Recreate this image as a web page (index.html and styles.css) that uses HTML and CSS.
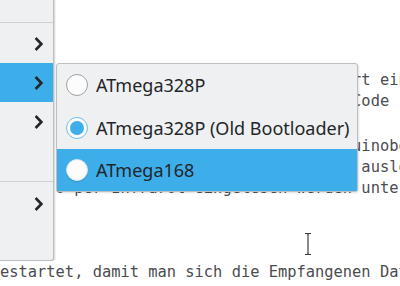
FILE: index.html
```html
<!DOCTYPE html>
<html lang="de">
<head>
    <meta charset="UTF-8">
    <title>Board-Auswahl</title>
    <link rel="stylesheet" href="styles.css">
</head>
<body>
    <!-- Editor im Hintergrund -->
    <div class="editor">
        <div class="line">Nach dem Hochladen des Sketch-Codes wart ein</div>
        <div class="line">auf ein Signal und schickt danach den Code</div>
        <div class="line para">Die Taste am Infrarotempfänger des Arduinoboard</div>
        <div class="line">gedrückt, um den Upload-Vorgang erneut auslösen</div>
        <div class="line">kann so per Infrarot eingelesen werden unter</div>
        <div class="line"> </div>
        <div class="line"> </div>
        <div class="line"> </div>
        <div class="line">estartet, damit man sich die Empfangenen Daten</div>
    </div>

    <!-- Hauptmenü (links) -->
    <div class="menu">
        <div class="menu-item"></div>
        <div class="menu-sep first"></div>
        <div class="menu-item">
            <svg class="chevron" width="11" height="16" viewBox="0 0 11 16"><path d="M2.6 2 L8.4 8 L2.6 14" /></svg>
        </div>
        <div class="menu-item active">
            <svg class="chevron" width="11" height="16" viewBox="0 0 11 16"><path d="M2.6 2 L8.4 8 L2.6 14" /></svg>
        </div>
        <div class="menu-item">
            <svg class="chevron" width="11" height="16" viewBox="0 0 11 16"><path d="M2.6 2 L8.4 8 L2.6 14" /></svg>
        </div>
        <div class="menu-item"></div>
        <div class="menu-sep"></div>
        <div class="menu-item">
            <svg class="chevron" width="11" height="16" viewBox="0 0 11 16"><path d="M2.6 2 L8.4 8 L2.6 14" /></svg>
        </div>
        <div class="menu-item last"></div>
    </div>

    <!-- Untermenü Prozessor -->
    <div class="submenu">
        <div class="sub-item">
            <span class="radio"></span>
            <span class="label">ATmega328P</span>
        </div>
        <div class="sub-item tall">
            <span class="radio checked"></span>
            <span class="label">ATmega328P (Old Bootloader)</span>
        </div>
        <div class="sub-item active">
            <span class="radio"></span>
            <span class="label">ATmega168</span>
        </div>
    </div>

    <!-- Textcursor der Maus -->
    <svg class="ibeam" width="10" height="24" viewBox="0 0 10 24">
        <path d="M2 1.5 H8 M5 1.5 V22.5 M2 22.5 H8" stroke="#fff" stroke-width="3" fill="none" stroke-linecap="round"/>
        <path d="M2 1.5 H8 M5 1.5 V22.5 M2 22.5 H8" stroke="#3b3d40" stroke-width="1.2" fill="none"/>
    </svg>
</body>
</html>
```

FILE: styles.css
```css
:root {
    --breeze-bg: #eff0f1;
    --breeze-text: #232629;
    --breeze-blue: #3daee9;
    --breeze-border: #bcbec0;
}

body {
    margin: 0;
    width: 400px;
    height: 286px;
    overflow: hidden;
    position: relative;
    background: #fff;
}

.editor {
    font-family: "DejaVu Sans Mono", monospace;
    font-size: 15.4px;
    line-height: 21px;
    color: #4a4c4f;
    padding-top: 70px;
}
.line {
    height: 21px;
    white-space: pre;
    overflow: hidden;
}
.para {
    margin-top: 24px;
}

/* Hauptmenü */
.menu {
    position: absolute;
    top: -17px;
    left: -10px;
    width: 63px;
    background: var(--breeze-bg);
    border-right: 1px solid var(--breeze-border);
    border-bottom: 1px solid var(--breeze-border);
    border-bottom-right-radius: 3px;
    box-shadow: 1px 0 0 #dcdde0, 2px 0 0 #f1f2f3;
}
.menu-item {
    height: 39px;
    display: flex;
    align-items: center;
    justify-content: flex-end;
    padding-right: 9px;
}
.menu-item.active {
    background: var(--breeze-blue);
}
.menu-item.last {
    height: 37px;
}
.menu-sep {
    height: 1px;
    background: #cfd1d3;
    margin: 1px 0 2px;
}
.menu-sep.first {
    margin: 0 0 1px;
}
.chevron path {
    fill: none;
    stroke: var(--breeze-text);
    stroke-width: 2.6;
}

/* Untermenü */
.submenu {
    position: absolute;
    top: 63px;
    left: 56px;
    width: 300px;
    background: var(--breeze-bg);
    border: 1px solid var(--breeze-border);
    border-radius: 3px;
    box-shadow: 1px 1px 2px rgba(0,0,0,0.12);
    font-family: "Noto Sans", sans-serif;
    font-size: 18px;
    color: var(--breeze-text);
}
.sub-item {
    height: 42px;
    display: flex;
    align-items: center;
    padding-left: 9px;
    gap: 8px;
}
.sub-item.tall {
    height: 43px;
}
.sub-item.active {
    background: var(--breeze-blue);
}
.radio {
    width: 20px;
    height: 20px;
    border-radius: 50%;
    border: 1px solid #9fa1a3;
    background: #fcfcfc;
    box-sizing: content-box;
    position: relative;
}
.radio.checked {
    border-color: #6cbfe9;
    background: #fcfcfc;
}
.radio.checked::after {
    content: '';
    position: absolute;
    top: 3px;
    left: 3px;
    width: 14px;
    height: 14px;
    border-radius: 50%;
    background: var(--breeze-blue);
}
.sub-item.active .radio {
    border-color: #cfe8f5;
    box-shadow: 0 1px 1px rgba(0,0,0,0.15);
}

.ibeam {
    position: absolute;
    left: 303px;
    top: 232px;
}
```
